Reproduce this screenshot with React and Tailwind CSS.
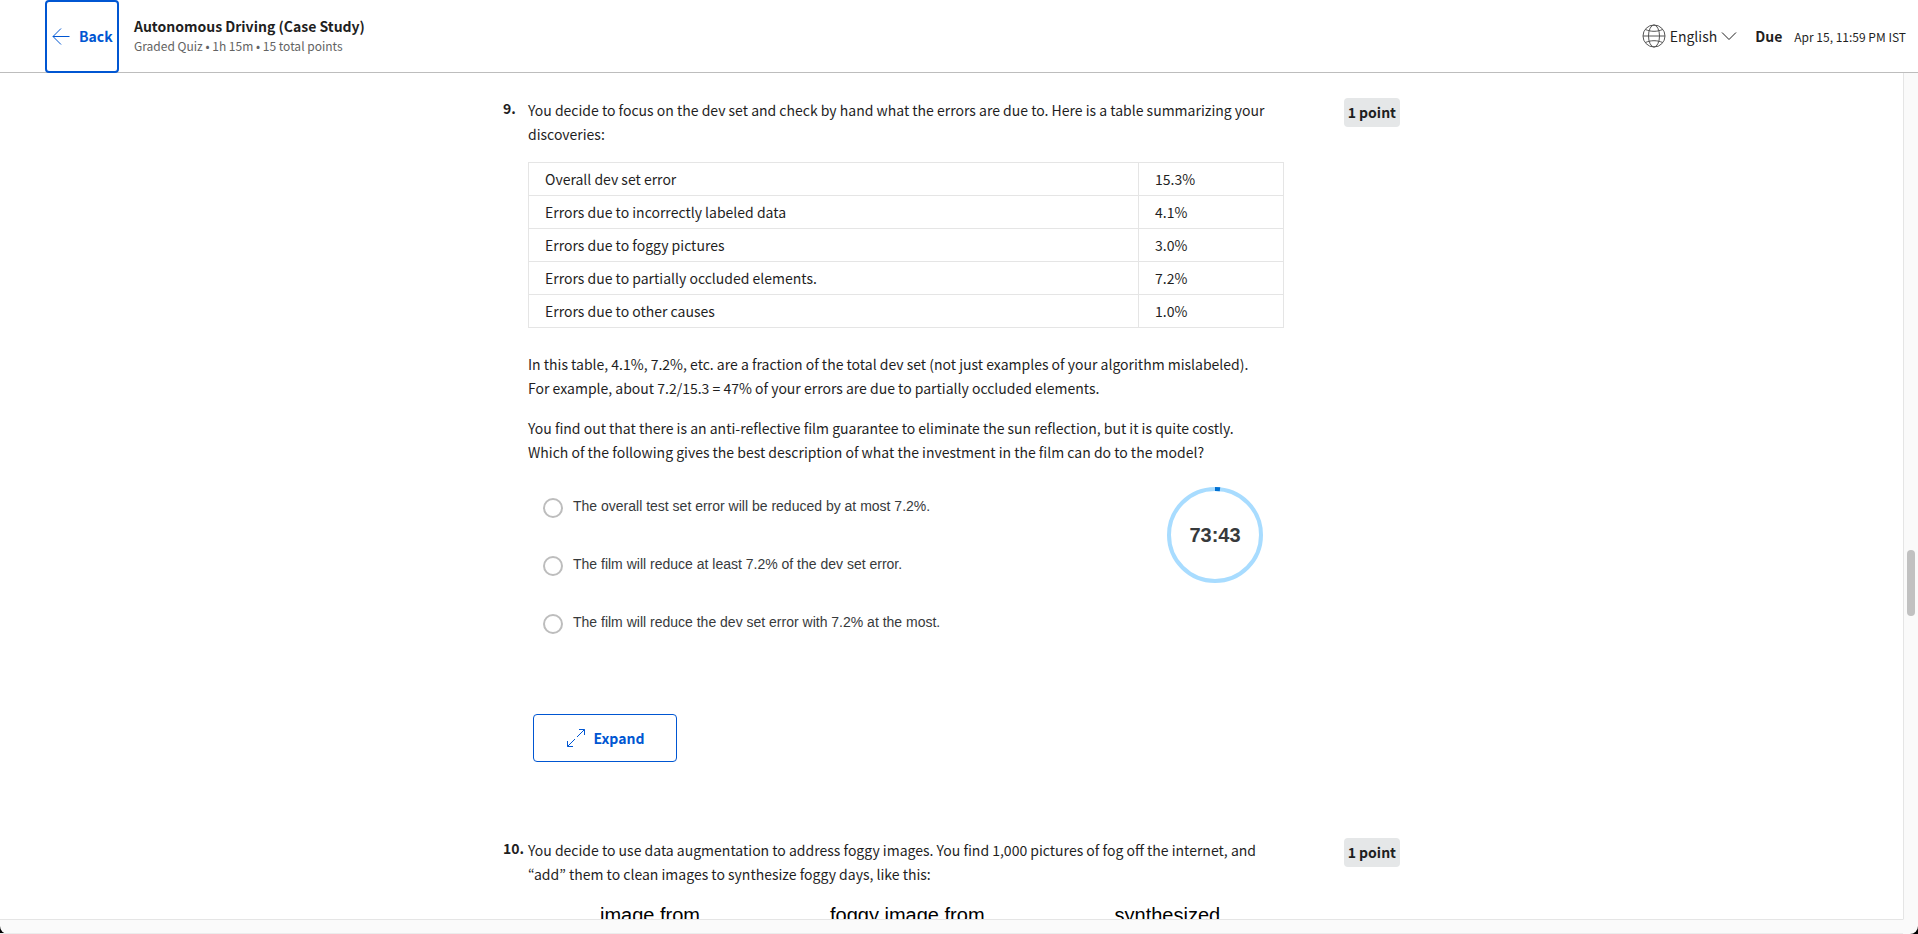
const SANS = "font-['Noto_Sans_CJK_KR',sans-serif]";

const errorRows = [
  ["Overall dev set error", "15.3%"],
  ["Errors due to incorrectly labeled data", "4.1%"],
  ["Errors due to foggy pictures", "3.0%"],
  ["Errors due to partially occluded elements.", "7.2%"],
  ["Errors due to other causes", "1.0%"],
];

const options = [
  "The overall test set error will be reduced by at most 7.2%.",
  "The film will reduce at least 7.2% of the dev set error.",
  "The film will reduce the dev set error with 7.2% at the most.",
];

function Header() {
  return (
    <header className="flex h-[73px] shrink-0 items-center border-b border-[#bdbdbd] bg-white pr-3 pl-[45px]">
      <button
        type="button"
        className="-mb-px flex h-[73px] w-[74px] items-center gap-2 rounded border-2 border-[#0056d2] bg-white pb-0.5 pl-1 text-sm font-bold text-[#0056d2]"
      >
        <svg viewBox="0 0 20 20" className="h-5 w-5 shrink-0" fill="none" stroke="currentColor" aria-hidden="true">
          <path d="M18.5 10.5H2M10 2.5l-8 8 8 8" />
        </svg>
        Back
      </button>
      <div className="ml-[15px] grow">
        <h1 className="text-sm leading-5 font-bold">Autonomous Driving (Case Study)</h1>
        <p className="text-xs leading-5 text-[#636363]">Graded Quiz • 1h 15m • 15 total points</p>
      </div>
      <button type="button" className="flex items-center gap-1 text-sm">
        <svg viewBox="0 0 24 24" className="h-6 w-6" fill="none" stroke="#555" aria-hidden="true">
          <circle cx="12" cy="12" r="11" />
          <ellipse cx="12" cy="12" rx="5.5" ry="11" />
          <path d="M1 12h22M3.5 5.500c5 2.400 12 2.400 17 0M3.500 18.500c5-2.400 12-2.400 17 0" />
        </svg>
        English
        <svg viewBox="0 0 16 16" className="h-4 w-4" fill="none" stroke="currentColor" aria-hidden="true">
          <path d="M1 4.500l7 7 7-7" />
        </svg>
      </button>
      <p className="ml-[18px] flex items-baseline gap-3 text-xs">
        <span className="text-sm font-bold">Due</span>
        Apr 15, 11:59 PM IST
      </p>
    </header>
  );
}

function Question({ number, children }) {
  return (
    <section className="mx-auto flex w-full max-w-[897px] items-start text-sm leading-6">
      <span className="-mt-0.5 w-[25px] shrink-0 font-bold">{number}.</span>
      <div className="max-w-[756px] grow">{children}</div>
      <span className="ml-auto rounded bg-[#e5e7e8] px-1 leading-[29px] font-bold whitespace-nowrap">1 point</span>
    </section>
  );
}

function Timer() {
  return (
    <div
      role="timer"
      className="mt-px mr-[21px] flex h-24 w-24 items-center justify-center font-['Liberation_Sans',sans-serif] text-xl font-bold text-[#373a3c]"
    >
      <svg viewBox="0 0 96 96" className="absolute h-24 w-24" fill="none" strokeWidth="4" aria-hidden="true">
        <circle cx="48" cy="48" r="46" stroke="#a8dcff" />
        <path d="M48 2A46 46 0 0 1 53 2.300" stroke="#0070d2" />
      </svg>
      <span>73:43</span>
    </div>
  );
}

export default function App() {
  return (
    <div className={`${SANS} flex h-screen flex-col overflow-hidden bg-black text-[#1f1f1f]`}>
      <Header />
      <div className="flex min-h-0 grow rounded-b-lg bg-[#fafafa]">
        <div className="flex min-w-0 grow flex-col">
          <main className="min-h-0 grow overflow-hidden border-b border-[#e5e5e5] bg-white pt-[25px]">
            <Question number={9}>
              <p>
                You decide to focus on the dev set and check by hand what the errors are due to. Here is a table
                summarizing your discoveries:
              </p>
              <table className="mt-4 w-full border-collapse">
                <tbody>
                  {errorRows.map(([label, value]) => (
                    <tr key={label}>
                      <td className="h-[33px] border border-[#e5e5e5] px-4">{label}</td>
                      <td className="w-[145px] border border-[#e5e5e5] px-4">{value}</td>
                    </tr>
                  ))}
                </tbody>
              </table>
              <p className="mt-6">
                In this table, 4.1%, 7.2%, etc. are a fraction of the total dev set (not just examples of your algorithm
                mislabeled).
                <br />
                For example, about 7.2/15.3 = 47% of your errors are due to partially occluded elements.
              </p>
              <p className="mt-4">
                You find out that there is an anti-reflective film guarantee to eliminate the sun reflection, but it is
                quite costly.
                <br />
                Which of the following gives the best description of what the investment in the film can do to the
                model?
              </p>
              <div className="mt-[22px] flex items-start justify-between">
                <fieldset className="flex flex-col gap-[34px] pt-2 pl-[15px] font-['Liberation_Sans',sans-serif] text-[#373a3c]">
                  {options.map((option) => (
                    <label key={option} className="flex h-6 items-center gap-2.5">
                      <input
                        type="radio"
                        name="q9"
                        className="mt-1 h-5 w-5 appearance-none rounded-full border-2 border-[#bdbdbd] checked:border-[6px] checked:border-[#0056d2]"
                      />
                      {option}
                    </label>
                  ))}
                </fieldset>
                <Timer />
              </div>
              <button
                type="button"
                className="mt-20 ml-[5px] flex h-12 w-36 items-center justify-center gap-2 rounded border border-[#0056d2] bg-white font-bold text-[#0056d2]"
              >
                <svg viewBox="0 0 20 20" className="h-5 w-5" fill="none" stroke="currentColor" aria-hidden="true">
                  <path d="M11 9l7.500-7.500M13 1.500h5.500V7M9 11l-7.500 7.500M1.500 13v5.500H7" />
                </svg>
                Expand
              </button>
            </Question>
            <div className="h-[76px]" />
            <Question number={10}>
              <p>
                You decide to use data augmentation to address foggy images. You find 1,000 pictures of fog off the
                internet, and
                <br />
                “add” them to clean images to synthesize foggy days, like this:
              </p>
              <div className="mt-[15px] flex gap-[130px] pl-[72px] font-['Liberation_Sans',sans-serif] text-xl leading-7 text-black">
                <span>image from</span>
                <span>foggy image from</span>
                <span>synthesized</span>
              </div>
            </Question>
          </main>
          <div className="h-3.5 shrink-0 border-b border-[#ececec]" />
        </div>
        <div className="mb-3.5 w-[15px] shrink-0 border-b border-l border-[#e5e5e5] border-b-transparent pt-[477px] pl-[3px]">
          <div className="h-[66px] w-2 rounded-full bg-[#c1c1c1]" />
        </div>
      </div>
    </div>
  );
}
